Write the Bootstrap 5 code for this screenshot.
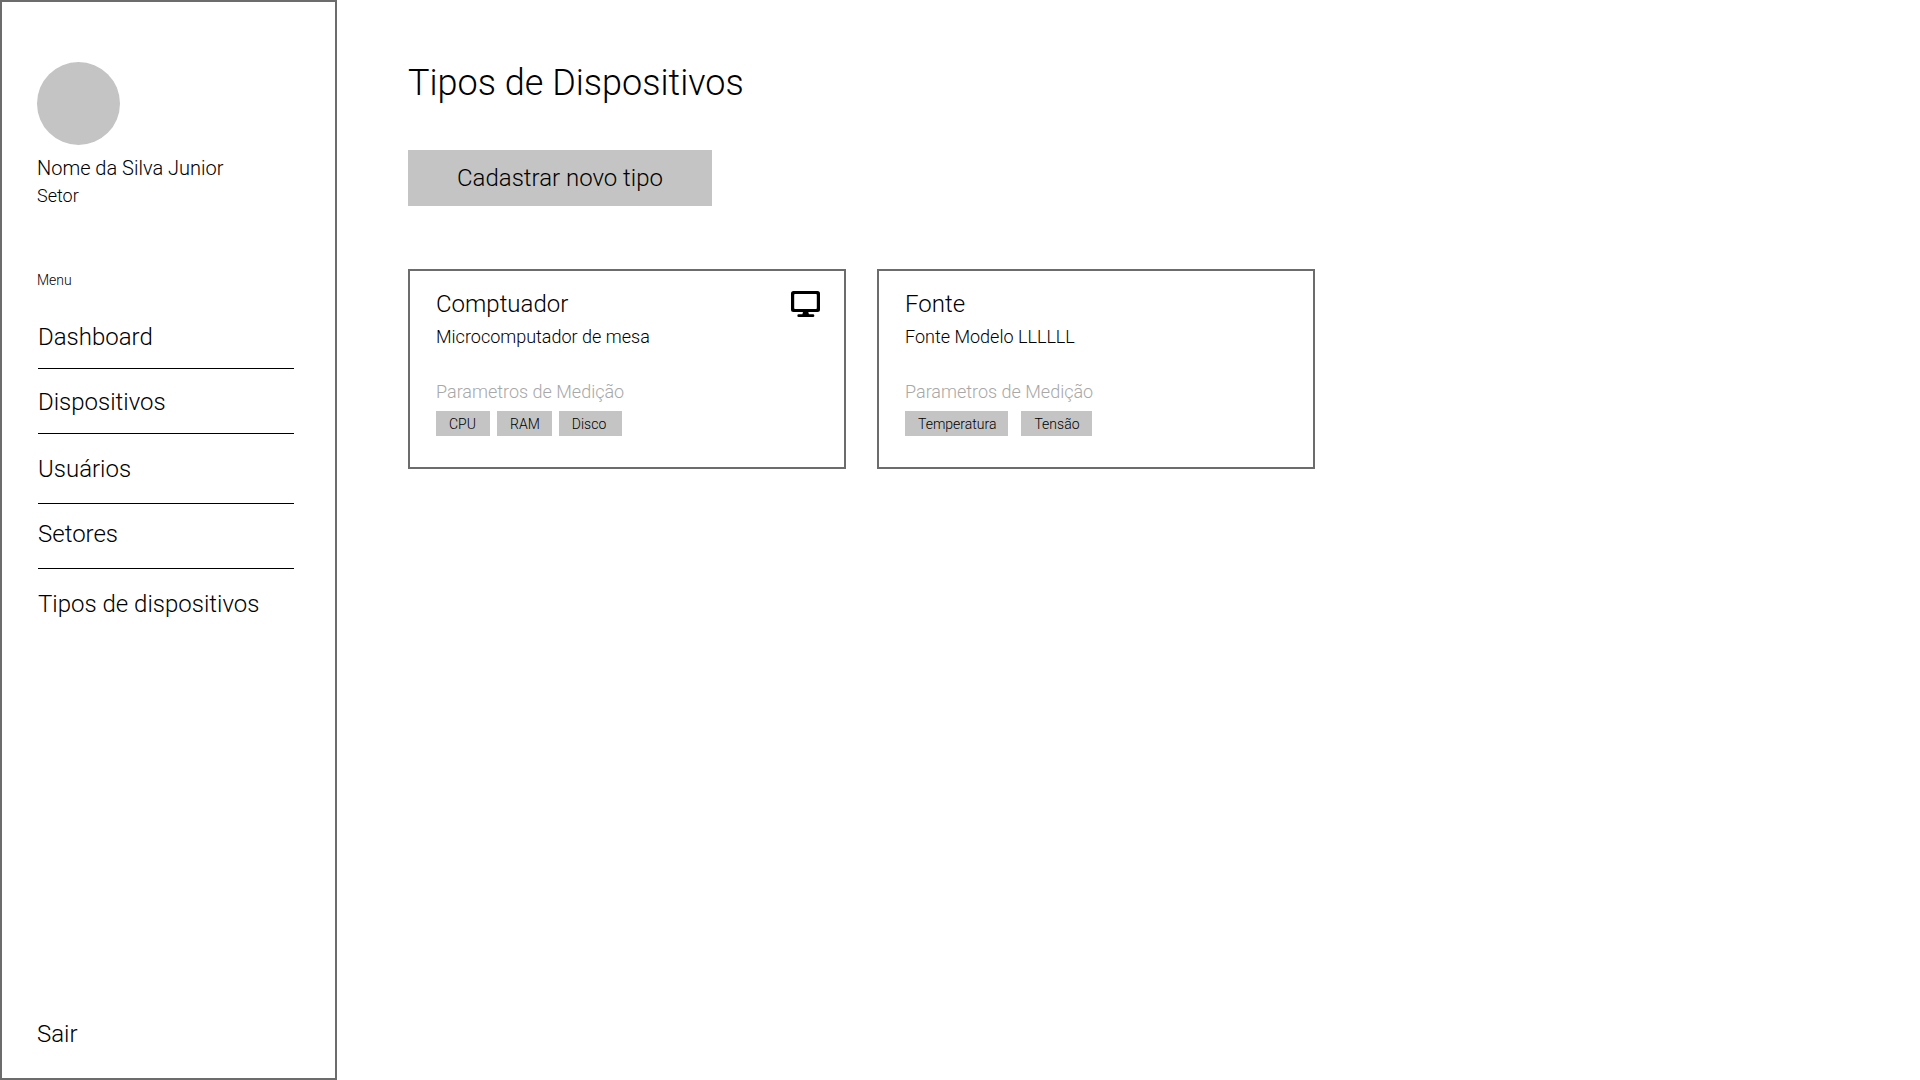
<!DOCTYPE html>
<html lang="pt-BR">
<head>
<meta charset="utf-8">
<meta name="viewport" content="width=device-width, initial-scale=1">
<title>Tipos de Dispositivos</title>
<link href="https://cdn.jsdelivr.net/npm/bootstrap@5.3.0/dist/css/bootstrap.min.css" rel="stylesheet">
<style>
  body { font-family: Roboto, "Liberation Sans", sans-serif; font-weight: 300; color: #000; background: #fff; }
  a { color: inherit; text-decoration: none; }
  .side-panel { width: 337px; border: 2px solid #6c6c6c; padding: 60px 40px 28px 35px; }
  .avatar { width: 83px; height: 83px; margin-bottom: 9px; background: #c4c4c4; }
  .t-36 { font-size: 36px; line-height: 48px; font-weight: 300; }
  .t-24 { font-size: 24px; line-height: 32px; font-weight: 300; }
  .t-20 { font-size: 20px; line-height: 28px; }
  .t-18 { font-size: 18px; line-height: 24px; }
  .t-14 { font-size: 14px; line-height: 20px; font-weight: 300; }
  .user-sector { margin: 2px 0 0; }
  .menu-title { margin: 62px 0 14px; }
  .menu-list { margin: 0 1px; }
  .menu-list li + li { border-top: 1px solid #000; }
  .menu-list a { padding: 17px 0 15px; }
  .menu-list .roomy a { padding: 19px 0 18px; }
  .menu-list .raised a { padding: 14px 0 18px; }
  .content { padding: 59px 136px 59px 71px; }
  .btn-new { width: 304px; margin: 43px 0 63px; padding: 12px; border: 0; border-radius: 0; background: #c4c4c4; color: #000; }
  .btn-new:hover { background: #b5b5b5; }
  .type-row { --bs-gutter-x: 31px; --bs-gutter-y: 31px; }
  .type-card { border: 2px solid #6c6c6c; padding: 17px 24px 31px 26px; }
  .type-card h2 { margin-bottom: 5px; }
  .type-icon { width: 29px; height: 26px; margin-top: 3px; }
  .param-label { margin: 31px 0 7px; color: #a8a8a8; }
  .chips { gap: 7px; }
  .chips-wide { gap: 13px; }
  .chip { min-width: 54px; padding: 3px 12px 2px 13px; background: #c4c4c4; }
</style>
<script src="https://cdn.jsdelivr.net/npm/bootstrap@5.3.0/dist/js/bootstrap.bundle.min.js" defer></script>
</head>
<body>
<div class="d-flex min-vh-100">
  <aside class="side-panel d-flex flex-column flex-shrink-0">
    <div class="avatar rounded-circle"></div>
    <p class="t-20 mb-0">Nome da Silva Junior</p>
    <p class="t-18 user-sector">Setor</p>
    <p class="t-14 menu-title">Menu</p>
    <nav aria-label="Menu">
      <ul class="menu-list list-unstyled t-24">
        <li><a class="d-block" href="#">Dashboard</a></li>
        <li><a class="d-block" href="#">Dispositivos</a></li>
        <li class="roomy"><a class="d-block" href="#">Usuários</a></li>
        <li class="raised"><a class="d-block" href="#">Setores</a></li>
        <li class="roomy"><a class="d-block" href="#">Tipos de dispositivos</a></li>
      </ul>
    </nav>
    <a class="t-24 mt-auto" href="#">Sair</a>
  </aside>
  <main class="content flex-grow-1">
    <h1 class="t-36 mb-0">Tipos de Dispositivos</h1>
    <button type="button" class="btn btn-new t-24 d-block">Cadastrar novo tipo</button>
    <div class="row row-cols-1 row-cols-lg-2 row-cols-xl-3 type-row mt-0">
      <div class="col mt-0">
        <article class="type-card h-100">
          <div class="d-flex justify-content-between align-items-start">
            <h2 class="t-24">Comptuador</h2>
            <svg class="type-icon" viewBox="0 0 29 26" role="img" aria-label="Computador">
              <path fill-rule="evenodd" d="M2.500 0h24A2.500 2.500 0 0 1 29 2.500v16a2.500 2.500 0 0 1-2.500 2.500H17.300l.6 2.300h4.100a1.350 1.350 0 0 1 0 2.700H7.700a1.350 1.350 0 0 1 0-2.700h3.700L12 21H2.500A2.500 2.500 0 0 1 0 18.500v-16A2.500 2.500 0 0 1 2.500 0zM4 3a.8.8 0 0 0-.8.8v13.400a.8.8 0 0 0 .8.8h21a.8.8 0 0 0 .8-.8V3.800A.8.8 0 0 0 25 3z"/>
            </svg>
          </div>
          <p class="t-18 mb-0">Microcomputador de mesa</p>
          <p class="t-18 param-label">Parametros de Medição</p>
          <div class="chips d-flex flex-wrap t-14">
            <span class="chip">CPU</span>
            <span class="chip">RAM</span>
            <span class="chip pe-3">Disco</span>
          </div>
        </article>
      </div>
      <div class="col mt-0">
        <article class="type-card h-100">
          <h2 class="t-24">Fonte</h2>
          <p class="t-18 mb-0">Fonte Modelo LLLLLL</p>
          <p class="t-18 param-label">Parametros de Medição</p>
          <div class="chips-wide d-flex flex-wrap t-14">
            <span class="chip">Temperatura</span>
            <span class="chip">Tensão</span>
          </div>
        </article>
      </div>
    </div>
  </main>
</div>
</body>
</html>
